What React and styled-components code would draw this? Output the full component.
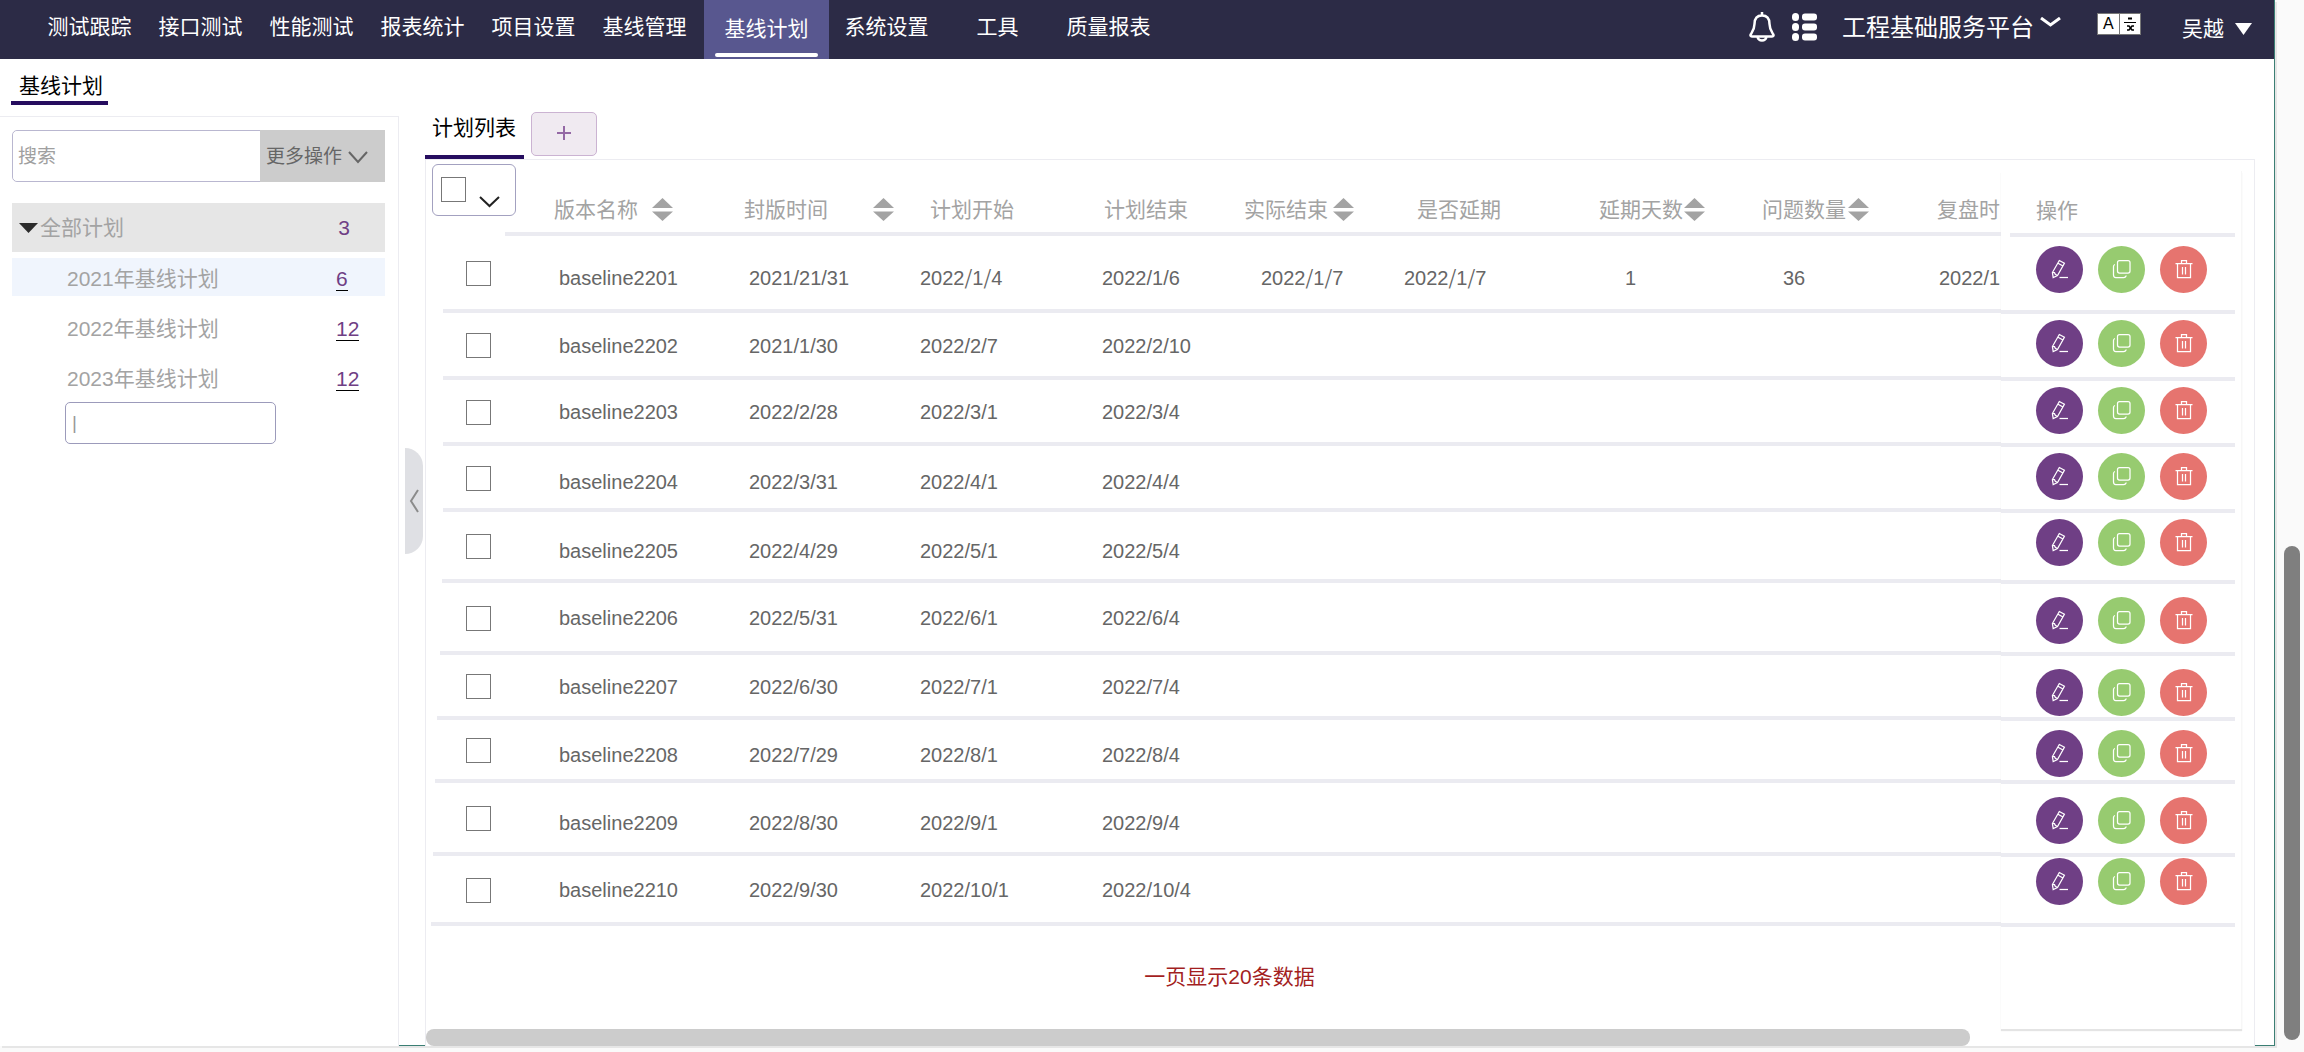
import { useState } from 'react'
import styled, { createGlobalStyle } from 'styled-components'

const GlobalStyle = createGlobalStyle`
    * {
        box-sizing: border-box;
    }
    body {
        margin: 0;
        background: #fafafa;
        font-family: "Liberation Sans", "Noto Sans CJK SC", sans-serif;
        font-size: 21px;
        line-height: 24px;
        color: #000;
    }
    button, input {
        font: inherit;
    }
`

/* ---------- page frame ---------- */

const Window = styled.div`
    display: flex;
    min-height: 100vh;
    padding-bottom: 6px;
`
const Page = styled.div`
    flex: 1;
    min-width: 0;
    display: flex;
    flex-direction: column;
    background: #fff;
    border-right: 1px solid #3b7f74;
    border-bottom: 1px solid #3b7f74;
    box-shadow: 2px 2px 0 #e6e6e6;
`
const Rail = styled.div`
    width: 29px;
    display: flex;
    justify-content: center;
    align-items: flex-end;
    padding: 0 3px 6px 8px;
`
const RailThumb = styled.div`
    width: 16px;
    height: 47vh;
    border-radius: 8px;
    background: #7f7f7f;
`

/* ---------- top bar ---------- */

const Nav = styled.nav`
    display: flex;
    justify-content: space-between;
    height: 59px;
    padding: 0 22px 0 34px;
    background: #2c2b46;
    color: #fff;
`
const Menu = styled.div`
    display: flex;
    align-items: flex-start;
`
const MenuLink = styled.a`
    width: 111px;
    line-height: 54px;
    text-align: center;
    color: #fff;
    text-decoration: none;
`
const ActiveLink = styled.a`
    display: flex;
    flex-direction: column;
    width: 125px;
    height: 60px;
    margin: 0 2px 0 4px;
    padding: 4px 11px 3px;
    background: #58578f;
    color: #fff;
    text-align: center;
    text-decoration: none;
    line-height: 49px;
`
const ActiveBar = styled.span`
    height: 4px;
    border-radius: 2px;
    background: #fff;
`
const Tools = styled.div`
    display: flex;
    align-items: center;
    height: 54px;
`
const IconButton = styled.button`
    display: flex;
    padding: 0;
    margin-right: ${({ $gap }) => $gap}px;
    border: 0;
    background: none;
    color: inherit;
`
const Platform = styled.button`
    display: flex;
    align-items: center;
    gap: 6px;
    padding: 2px 0 0;
    margin-right: 36px;
    border: 0;
    background: none;
    color: #fff;
    font-size: 24px;
    line-height: 28px;

    svg {
        margin-bottom: 12px;
    }
`
const Lang = styled.button`
    display: flex;
    width: 44px;
    height: 22px;
    padding: 0;
    margin: 0 41px 6px 0;
    border: 1px solid #777;
    background: #fff;
    color: #000;
    font-size: 16px;
    line-height: 20px;
`
const LangCell = styled.span`
    flex: 1;
    height: 20px;
    display: flex;
    justify-content: center;
    align-items: center;

    & + & {
        border-left: 1px solid #777;
    }
`
const User = styled.button`
    display: flex;
    align-items: center;
    gap: 11px;
    padding: 4px 0 0;
    border: 0;
    background: none;
    color: #fff;
`

/* ---------- left side ---------- */

const Body = styled.div`
    flex: 1;
    display: flex;
`
const Left = styled.div`
    width: 399px;
    display: flex;
    flex-direction: column;
    margin-bottom: -1px;
    background: #fff;
`
const PageTitle = styled.h1`
    width: 97px;
    height: 46px;
    margin: 0 0 11px 11px;
    padding: 15px 0 0 8px;
    border-bottom: 4px solid #260d5f;
    font-size: 21px;
    font-weight: 400;
`
const Side = styled.aside`
    flex: 1;
    padding: 13px 13px 0 12px;
    border-top: 1px solid #ececf1;
    border-right: 1px solid #ececf1;
`
const Search = styled.form`
    display: flex;
    height: 52px;
    margin-bottom: 21px;
    border: 1px solid #b9b7d0;
    border-radius: 5px;
    font-size: 19px;
`
const SearchInput = styled.input`
    flex: 1;
    min-width: 0;
    padding: 2px 5px 0;
    border: 0;
    border-radius: 5px;
    outline: 0;

    &::placeholder {
        color: #a0a0a0;
        opacity: 1;
    }
`
const MoreButton = styled.button`
    display: flex;
    align-items: center;
    gap: 6px;
    width: 125px;
    margin: -1px -1px -1px 0;
    padding: 2px 0 0 6px;
    border: 0;
    background: #ccc;
    color: #666;
`
const TreeRoot = styled.div`
    display: flex;
    align-items: center;
    height: 49px;
    margin-bottom: 6px;
    padding: 0 35px 0 7px;
    background: #e6e6e6;
    color: #2c2c2c;
`
const TreeName = styled.span`
    flex: 1;
    padding-left: 2px;
    color: #a3a3a3;
`
const RootCount = styled.span`
    color: #6f3f85;
`
const TreeList = styled.ul`
    display: flex;
    flex-direction: column;
    gap: 12px;
    margin: 0 0 6px;
    padding: 0;
    list-style: none;
`
const TreeItem = styled.li`
    display: flex;
    align-items: center;
    height: 38px;
    padding: 3px 0 0 53px;
    background: ${({ $active }) => ($active ? '#f0f5fd' : '#fff')};
`
const CountBox = styled.span`
    width: 49px;
`
const Count = styled.a`
    display: inline-block;
    line-height: 22px;
    border-bottom: 1px solid #000;
    color: #6f3f85;
    text-decoration: none;
`
const NewPlan = styled.input`
    display: block;
    width: 211px;
    height: 42px;
    margin-left: 53px;
    padding: 0 6px;
    border: 1px solid #9c9bbb;
    border-radius: 5px;
    outline: 0;
    color: #999;
    font-size: 19px;
`
const Gutter = styled.div`
    width: 26px;
    padding: 389px 2px 0 6px;
`
const Collapse = styled.button`
    display: flex;
    align-items: center;
    justify-content: center;
    width: 18px;
    height: 106px;
    padding: 0;
    border: 0;
    border-radius: 0 18px 18px 0;
    background: #dfe0e4;
    color: #8b8b8b;
`

/* ---------- plan list ---------- */

const Main = styled.main`
    flex: 1;
    min-width: 0;
    display: flex;
    flex-direction: column;
    margin: 0 19px -1px 0;
    padding-top: 53px;
    background: #fff;
`
const Tabs = styled.div`
    display: flex;
    align-items: flex-start;
    gap: 7px;
    height: 47px;
`
const Tab = styled.a`
    width: 99px;
    height: 47px;
    padding: 4px 0 0 7px;
    border-bottom: 4px solid #260d5f;
    color: #000;
    text-decoration: none;
`
const AddButton = styled.button`
    width: 66px;
    height: 44px;
    display: flex;
    align-items: center;
    justify-content: center;
    padding: 0 0 2px;
    border: 1px solid #cbb3d2;
    border-radius: 5px;
    background: #f0eaf1;
    color: #9468a5;
`
const Panel = styled.div`
    flex: 1;
    display: flex;
    padding-right: 12px;
    border: 1px solid #ececf1;
    border-bottom: 0;
`
const Scroller = styled.div`
    flex: 1;
    min-width: 0;
    display: flex;
    flex-direction: column;
    overflow: hidden;
`
const Table = styled.table`
    width: ${({ $width }) => $width};
    table-layout: fixed;
    border-collapse: collapse;
    border-spacing: 0;
    font-size: 20px;
    color: #666;
`
const Row = styled.tr`
    height: ${({ $height }) => $height}px;
    background: linear-gradient(#ebebf1, #ebebf1) no-repeat right bottom;
    background-size: calc(100% - ${({ $inset = 0 }) => $inset}px) 4px;
`
const Th = styled.th`
    padding: 0 0 14px ${({ $left = 0 }) => $left}px;
    font-size: 21px;
    font-weight: 400;
    text-align: left;
    vertical-align: bottom;
    white-space: nowrap;
    color: #a3a3a3;
`
const HeadCell = styled.span`
    display: flex;
    align-items: center;
    gap: ${({ $gap }) => $gap}px;
`
const Td = styled.td`
    padding: ${({ $low }) => ($low ? '6px' : '0')} 0 ${({ $low }) => ($low ? '0' : '2px')} ${({ $left = 0 }) => $left}px;
    white-space: nowrap;
    vertical-align: middle;
`
const PickHead = styled.th`
    padding: 4px 0 0 6px;
    vertical-align: top;
`
const PickAll = styled.div`
    display: flex;
    width: 84px;
    height: 52px;
    padding: 12px 0 0 8px;
    gap: 13px;
    border: 1px solid #a3a1c0;
    border-radius: 6px;
`
const PickArrow = styled.button`
    align-self: flex-end;
    display: flex;
    padding: 0 0 7px;
    border: 0;
    background: none;
    color: #222;
`
const Check = styled.input`
    appearance: none;
    display: block;
    width: 25px;
    height: 25px;
    margin: 0;
    border: 1px solid #777;
    background: #fff;

    &:checked {
        background: #6f3f85;
    }
`
const Slash = styled.span`
    font-family: "Noto Sans CJK SC", sans-serif;
`
const Note = styled.p`
    margin: 39px 0 0;
    padding-left: 32px;
    text-align: center;
    color: #a31f1f;
`
const ScrollThumb = styled.div`
    width: 98%;
    height: 17px;
    margin-top: auto;
    border-radius: 8px;
    background: #ccc;
`
const ActionPane = styled.div`
    width: 241px;
    margin: 11px 0 17px;
    border-right: 1px solid #f7f7f7;
    box-shadow: 0 2px 1px #e4e4e4;
`
const ActionCell = styled.td`
    padding: ${({ $top }) => $top}px 0 0 35px;
    vertical-align: top;
`
const Actions = styled.div`
    display: flex;
    gap: 15px;
    height: 47px;
`
const Round = styled.button`
    display: flex;
    align-items: center;
    justify-content: center;
    width: 47px;
    height: 47px;
    padding: 0 0 1px;
    border: 0;
    border-radius: 50%;
    background: ${({ $color }) => $color};
    color: #fff;
`

/* ---------- icons ---------- */

const Chevron = ({ width, height, stroke = 2 }) => (
    <svg width={width} height={height} viewBox={`0 0 ${width} ${height}`} fill="none" stroke="currentColor" strokeWidth={stroke}>
        <path d={`M1 1L${width / 2} ${height - 2}L${width - 1} 1`} />
    </svg>
)

const Triangle = ({ width, height }) => (
    <svg width={width} height={height} viewBox="0 0 18 10" preserveAspectRatio="none" fill="currentColor">
        <path d="M0 0H18L9 10Z" />
    </svg>
)

const BellIcon = () => (
    <svg width="26" height="30" viewBox="0 0 26 30" fill="none" stroke="currentColor" strokeWidth="2.500">
        <path d="M13 0V4" />
        <path d="M13 3.500C8 3.500 5.500 7 5.500 12C5.500 17 4 19 2 22C1 23.500 1.500 24.500 3 24.500H23C24.500 24.500 25 23.500 24 22C22 19 20.500 17 20.500 12C20.500 7 18 3.500 13 3.500Z" />
        <path d="M8.500 25C9 27 11 28.500 13 28.500C15 28.500 17 27 17.500 25" />
    </svg>
)

const ListIcon = () => (
    <svg width="26" height="28" viewBox="0 0 26 28" fill="currentColor">
        {[0, 10, 20].map((y) => (
            <g key={y}>
                <rect x="0" y={y} width="7" height="8" rx="3.500" />
                <rect x="10" y={y + 0.5} width="15" height="7" rx="3" />
            </g>
        ))}
    </svg>
)

const TranslateIcon = () => (
    <svg width="14" height="16" viewBox="0 0 14 16" fill="none" stroke="#000">
        <path d="M5 2.500H9" strokeWidth="2" />
        <path d="M1 6.500H13" />
        <path d="M4 10H6L9 14H11M11 10H9L6 14H4" strokeWidth="1.500" />
    </svg>
)

const SortIcon = () => (
    <svg width="21" height="24" viewBox="0 0 21 24" fill="#a3a3a3">
        <path d="M10.500 0L21 10H0Z" />
        <path d="M10.500 23L21 13.500H0Z" />
    </svg>
)

const CollapseIcon = () => (
    <svg width="10" height="24" viewBox="0 0 10 24" fill="none" stroke="currentColor" strokeWidth="2">
        <path d="M9 1L2 12L9 23" />
    </svg>
)

const PlusIcon = () => (
    <svg width="14" height="14" viewBox="0 0 14 14" stroke="currentColor" strokeWidth="2">
        <path d="M7 0V14M0 7H14" />
    </svg>
)

const PencilIcon = () => (
    <svg width="18" height="20" viewBox="0 0 18 20" fill="none" stroke="currentColor" strokeWidth="1.250">
        <path d="M8.300 1.500L13.400 4.300L6.500 16.500L2.200 18.500L1.400 13.500L8.300 1.500Z" />
        <path d="M7 4.200L12 7M1.500 13.500L3.500 13.700L4.300 15.300L6.400 16.500" />
        <path d="M8.500 18.500H17" />
    </svg>
)

const CopyIcon = () => (
    <svg width="19" height="20" viewBox="0 0 19 20" fill="none" stroke="currentColor" strokeWidth="1.250">
        <rect x="5.500" y="1.500" width="12.500" height="12.500" rx="2" />
        <path d="M3 5.500C1.800 5.800 1.500 6.500 1.500 7.500V16C1.500 17.500 2.200 18.500 3.800 18.500H11.500C13 18.500 14 18 14.200 16.500" />
    </svg>
)

const TrashIcon = () => (
    <svg width="18" height="20" viewBox="0 0 18 20" fill="none" stroke="currentColor" strokeWidth="1.250">
        <path d="M0.500 4.500H17.500M6.500 4V1.500H11.500V4" />
        <path d="M2.500 4.500V18.500H15.500V4.500M7.500 8V15.500M10.500 8V15.500" />
    </svg>
)

/* ---------- data ---------- */

const menu = ['测试跟踪', '接口测试', '性能测试', '报表统计', '项目设置', '基线管理']
const menuEnd = ['系统设置', '工具', '质量报表']

const tree = [
    { name: '2021年基线计划', count: 6 },
    { name: '2022年基线计划', count: 12 },
    { name: '2023年基线计划', count: 12 },
]

const columns = [
    { key: 'name', title: '版本名称', width: 190, head: 0, cell: 5, sort: 14 },
    { key: 'sealed', title: '封版时间', width: 176, head: 0, cell: 5, sort: 45 },
    { key: 'start', title: '计划开始', width: 182, head: 10, cell: 0 },
    { key: 'end', title: '计划结束', width: 142, head: 2, cell: 0 },
    { key: 'realEnd', title: '实际结束', width: 160, head: 0, cell: 17, sort: 5 },
    { key: 'delayed', title: '是否延期', width: 195, head: 13, cell: 0 },
    { key: 'days', title: '延期天数', width: 163, head: 0, cell: 26, sort: 1 },
    { key: 'issues', title: '问题数量', width: 175, head: 0, cell: 21, sort: 2 },
    { key: 'review', title: '复盘时', width: 120, head: 0, cell: 2 },
]

const plans = [
    { name: 'baseline2201', sealed: '2021/21/31', start: '2022/1/4', end: '2022/1/6', realEnd: '2022/1/7', delayed: '2022/1/7', days: '1', issues: '36', review: '2022/1', height: 77, inset: 17, low: true, top: 9 },
    { name: 'baseline2202', sealed: '2021/1/30', start: '2022/2/7', end: '2022/2/10', height: 67, inset: 17, top: 6 },
    { name: 'baseline2203', sealed: '2022/2/28', start: '2022/3/1', end: '2022/3/4', height: 66, inset: 17, top: 6 },
    { name: 'baseline2204', sealed: '2022/3/31', start: '2022/4/1', end: '2022/4/4', height: 66, inset: 17, low: true, top: 6 },
    { name: 'baseline2205', sealed: '2022/4/29', start: '2022/5/1', end: '2022/5/4', height: 71, inset: 16, low: true, top: 6 },
    { name: 'baseline2206', sealed: '2022/5/31', start: '2022/6/1', end: '2022/6/4', height: 72, inset: 14, top: 13 },
    { name: 'baseline2207', sealed: '2022/6/30', start: '2022/7/1', end: '2022/7/4', height: 65, inset: 11, top: 13 },
    { name: 'baseline2208', sealed: '2022/7/29', start: '2022/8/1', end: '2022/8/4', height: 63, inset: 9, low: true, top: 9 },
    { name: 'baseline2209', sealed: '2022/8/30', start: '2022/9/1', end: '2022/9/4', height: 73, inset: 7, low: true, top: 13 },
    { name: 'baseline2210', sealed: '2022/9/30', start: '2022/10/1', end: '2022/10/4', height: 70, inset: 5, top: 1 },
]

const wideSlash = ['start', 'realEnd', 'delayed']

const DateText = ({ value }) =>
    value.split('/').map((part, i) => (
        <span key={i}>
            {i > 0 && <Slash>/</Slash>}
            {part}
        </span>
    ))

const Navbar = () => (
    <Nav>
        <Menu>
            {menu.map((item) => (
                <MenuLink href="#" key={item}>{item}</MenuLink>
            ))}
            <ActiveLink href="#" aria-current="page">
                基线计划
                <ActiveBar />
            </ActiveLink>
            {menuEnd.map((item) => (
                <MenuLink href="#" key={item}>{item}</MenuLink>
            ))}
        </Menu>
        <Tools>
            <IconButton $gap={17} aria-label="通知"><BellIcon /></IconButton>
            <IconButton $gap={24} aria-label="列表"><ListIcon /></IconButton>
            <Platform>
                工程基础服务平台
                <Chevron width={21} height={10} stroke={3} />
            </Platform>
            <Lang aria-label="语言">
                <LangCell>A</LangCell>
                <LangCell><TranslateIcon /></LangCell>
            </Lang>
            <User>
                吴越
                <Triangle width={17} height={12} />
            </User>
        </Tools>
    </Nav>
)

const Sidebar = () => (
    <Left>
        <PageTitle>基线计划</PageTitle>
        <Side>
            <Search onSubmit={(e) => e.preventDefault()}>
                <SearchInput placeholder="搜索" aria-label="搜索" />
                <MoreButton type="button">
                    更多操作
                    <Chevron width={20} height={13} />
                </MoreButton>
            </Search>
            <TreeRoot>
                <Triangle width={19} height={10} />
                <TreeName>全部计划</TreeName>
                <RootCount>3</RootCount>
            </TreeRoot>
            <TreeList>
                {tree.map((item, i) => (
                    <TreeItem key={item.name} $active={i === 0}>
                        <TreeName>{item.name}</TreeName>
                        <CountBox><Count href="#">{item.count}</Count></CountBox>
                    </TreeItem>
                ))}
            </TreeList>
            <NewPlan defaultValue="|" aria-label="新计划" />
        </Side>
    </Left>
)

const PlanTable = ({ picked, onPick, onPickAll }) => (
    <Table $width="1631px">
        <colgroup>
            <col style={{ width: 128 }} />
            {columns.map((col) => (
                <col key={col.key} style={{ width: col.width }} />
            ))}
        </colgroup>
        <thead>
            <Row $height={76} $inset={79}>
                <PickHead>
                    <PickAll>
                        <Check
                            type="checkbox"
                            aria-label="全选"
                            checked={picked.length === plans.length}
                            onChange={onPickAll}
                        />
                        <PickArrow aria-label="选择"><Chevron width={21} height={12} /></PickArrow>
                    </PickAll>
                </PickHead>
                {columns.map((col) => (
                    <Th key={col.key} $left={col.head}>
                        <HeadCell $gap={col.sort}>
                            {col.title}
                            {col.sort && <SortIcon />}
                        </HeadCell>
                    </Th>
                ))}
            </Row>
        </thead>
        <tbody>
            {plans.map((plan) => (
                <Row key={plan.name} $height={plan.height} $inset={plan.inset}>
                    <Td $left={40}>
                        <Check
                            type="checkbox"
                            aria-label={plan.name}
                            checked={picked.includes(plan.name)}
                            onChange={() => onPick(plan.name)}
                        />
                    </Td>
                    {columns.map((col) => (
                        <Td key={col.key} $left={col.cell} $low={plan.low}>
                            {plan.review && wideSlash.includes(col.key)
                                ? <DateText value={plan[col.key]} />
                                : plan[col.key]}
                        </Td>
                    ))}
                </Row>
            ))}
        </tbody>
    </Table>
)

const ActionTable = () => (
    <ActionPane>
        <Table $width="234px">
            <thead>
                <Row $height={66} $inset={9}>
                    <Th $left={35}>操作</Th>
                </Row>
            </thead>
            <tbody>
                {plans.map((plan) => (
                    <Row key={plan.name} $height={plan.height}>
                        <ActionCell $top={plan.top}>
                            <Actions>
                                <Round $color="#6f3f85" aria-label="编辑"><PencilIcon /></Round>
                                <Round $color="#97cb70" aria-label="复制"><CopyIcon /></Round>
                                <Round $color="#e6746f" aria-label="删除"><TrashIcon /></Round>
                            </Actions>
                        </ActionCell>
                    </Row>
                ))}
            </tbody>
        </Table>
    </ActionPane>
)

const App = () => {

    const [picked, setPicked] = useState([])

    const togglePick = (name) => {
        setPicked(picked.includes(name) ? picked.filter((n) => n !== name) : [...picked, name])
    }

    const toggleAll = () => {
        setPicked(picked.length === plans.length ? [] : plans.map((p) => p.name))
    }

  return (
    <Window>
        <GlobalStyle />
        <Page>
            <Navbar />
            <Body>
                <Sidebar />
                <Gutter>
                    <Collapse aria-label="收起"><CollapseIcon /></Collapse>
                </Gutter>
                <Main>
                    <Tabs>
                        <Tab href="#">计划列表</Tab>
                        <AddButton aria-label="新增"><PlusIcon /></AddButton>
                    </Tabs>
                    <Panel>
                        <Scroller>
                            <PlanTable picked={picked} onPick={togglePick} onPickAll={toggleAll} />
                            <Note>一页显示20条数据</Note>
                            <ScrollThumb />
                        </Scroller>
                        <ActionTable />
                    </Panel>
                </Main>
            </Body>
        </Page>
        <Rail>
            <RailThumb />
        </Rail>
    </Window>
  )
}

export default App
